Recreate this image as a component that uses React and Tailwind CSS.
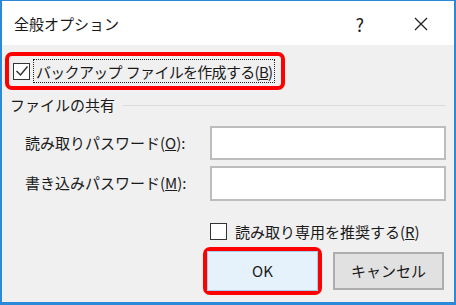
import React from "react";

const font = { fontFamily: '"Noto Sans CJK JP", "Noto Sans", sans-serif' };

function Check({ checked }) {
  return (
    <div className="w-[17px] h-[17px] border-[1.5px] border-[#333333] bg-white flex items-center justify-center shrink-0">
      {checked && (
        <svg width="14" height="14" viewBox="0 0 14 14">
          <path d="M1.5 7 L5.5 11 L12.5 2.5" fill="none" stroke="#333333" strokeWidth="1.5" />
        </svg>
      )}
    </div>
  );
}

export default function App() {
  return (
    <div
      className="w-[456px] h-[305px] bg-[#f0f0f0] border-t border-l-2 border-r-2 border-b-[3px] border-[#2a8ad9] flex flex-col text-[#1a1a1a] overflow-hidden"
      style={font}
    >
      <div className="h-[44px] bg-white flex items-center shrink-0">
        <span className="ml-[12px] mt-[2px] text-[15px]">全般オプション</span>
        <span className="ml-auto mr-[50px] mt-[2px] text-[18px]">?</span>
        <svg className="mr-[26px] mt-[2px]" width="14" height="14" viewBox="0 0 14 14">
          <path d="M1 1 L13 13 M13 1 L1 13" stroke="#222" strokeWidth="1.3" />
        </svg>
      </div>
      <div className="flex flex-col flex-1">
        <div className="mt-[7px] ml-[3px] w-[280px] h-[38px] border-4 border-[#ff0000] rounded-[7px] flex items-center">
          <div className="ml-[4px]"><Check checked /></div>
          <div className="ml-[3px] h-[24px] border border-dotted border-[#222] flex items-center pl-[2px] pr-[2px] text-[15px] leading-none whitespace-nowrap tracking-[-0.7px]">
            <span>バックアップ</span>
            <span className="ml-[4px]">ファイルを作成する(<u>B</u>)</span>
          </div>
        </div>
        <div className="mt-[5px] ml-[8px] mr-[8px] flex items-center">
          <span className="text-[15px] leading-[20px]">ファイルの共有</span>
          <div className="flex-1 ml-[8px] h-px bg-[#dcdcdc]" />
        </div>
        <div className="mt-[11px] ml-[23px] flex items-center">
          <span className="w-[185px] text-[15px]">読み取りパスワード(<u>O</u>):</span>
          <div className="w-[236px] h-[34px] bg-white border-2 border-[#bdbdbd]" />
        </div>
        <div className="mt-[6px] ml-[23px] flex items-center">
          <span className="w-[185px] text-[15px]">書き込みパスワード(<u>M</u>):</span>
          <div className="w-[236px] h-[35px] bg-white border-2 border-[#bdbdbd]" />
        </div>
        <div className="mt-[22px] ml-[208px] flex items-center">
          <Check />
          <span className="ml-[8px] text-[15px] leading-none">読み取り専用を推奨する(<u>R</u>)</span>
        </div>
        <div className="mt-[7px] ml-[201px] flex items-center">
          <div className="w-[119px] h-[48px] border-4 border-[#ff0000] rounded-[7px] flex">
            <div className="flex-1 bg-[#e5f1fb] border border-[#a8cdef] flex items-center justify-center text-[15px]">
              OK
            </div>
          </div>
          <div className="ml-[11px] w-[111px] h-[38px] bg-[#e1e1e1] border-2 border-[#adadad] flex items-center justify-center text-[15px]">
            キャンセル
          </div>
        </div>
      </div>
    </div>
  );
}
